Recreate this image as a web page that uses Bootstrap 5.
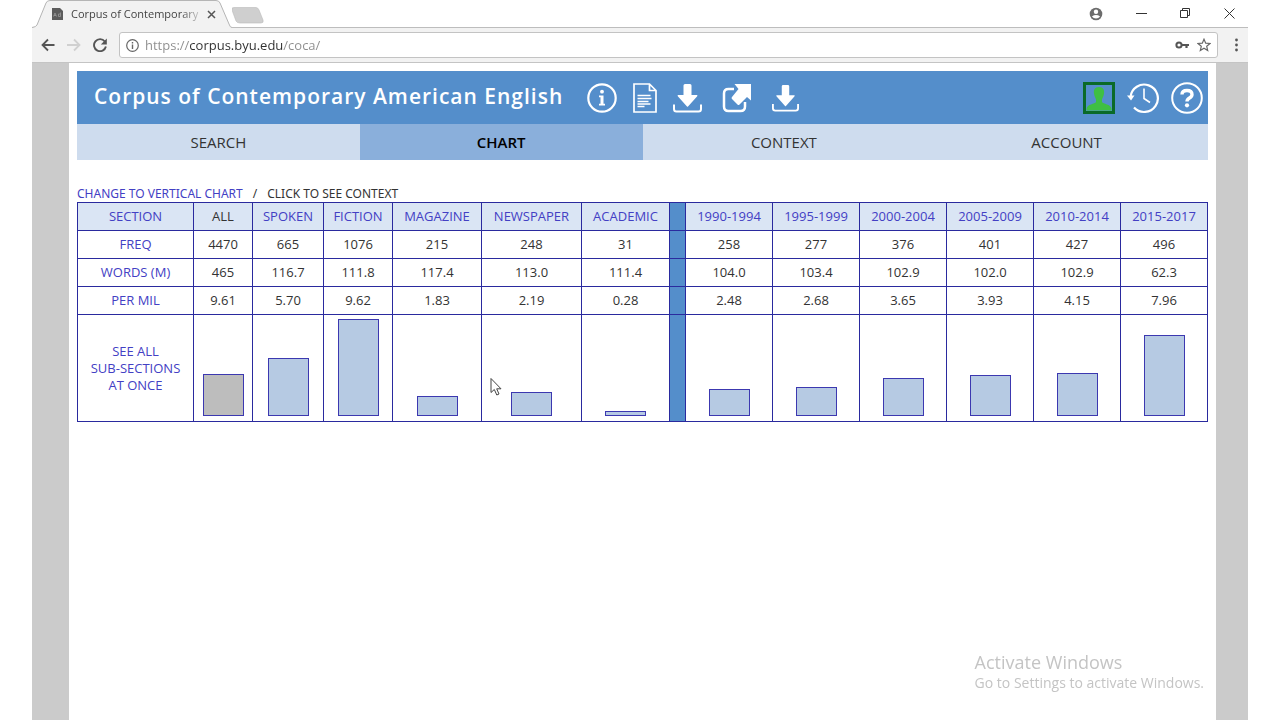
<!DOCTYPE html>
<html lang="en">
<head>
<meta charset="utf-8">
<meta name="viewport" content="width=device-width, initial-scale=1">
<title>Corpus of Contemporary American English</title>
<link href="https://cdn.jsdelivr.net/npm/bootstrap@5.3.0/dist/css/bootstrap.min.css" rel="stylesheet">
<style>
  body { font-family: "Open Sans", sans-serif; font-size: 13px; color: #333; background: #fff; padding: 0 32px; }
  svg { display: block; flex: none; }
  button.plain { border: 0; background: none; padding: 0; color: inherit; }

  /* browser frame */
  .tab-strip { height: 28px; border-bottom: 1px solid #bdbdbd; }
  .browser-tab { width: 200px; height: 28px; margin-bottom: -1px; padding: 0 15px 0 19px; }
  .browser-tab .tab-shape { position: absolute; inset: 0; }
  .browser-tab .tab-title { width: 128px; white-space: nowrap; color: #444; font-size: 11px;
    -webkit-mask-image: linear-gradient(to right, #000 85%, transparent 105%); mask-image: linear-gradient(to right, #000 85%, transparent 105%); }
  .window-buttons { gap: 33px; padding-right: 13px; color: #333; }
  .toolbar { height: 35px; background: #f2f2f2; border-bottom: 1px solid #c4c4c4; padding: 0 9px; gap: 12px; color: #555; }
  .address { height: 26px; border: 1px solid #c3c3c3; border-radius: 3px; background: #fff; padding: 0 6px; }
  .address input { border: 0; outline: 0; padding: 0 0 0 6px; min-width: 0; font-size: 13px; line-height: 20px; color: #888;
    background: linear-gradient(to right, #8d8d8d 50px, #2f2f2f 50px, #2f2f2f 144px, #8d8d8d 144px); -webkit-background-clip: text; background-clip: text; -webkit-text-fill-color: transparent; }

  /* page */
  .viewport-area { background: #cbcbcb; padding: 0 33px 0 37px; }
  .page { background: #fff; padding: 8px; }
  .site-header { height: 53px; background: #548ecb; color: #fff; padding: 0 5px 0 17px; }
  .site-header h1 { font-size: 21px; line-height: 30px; font-weight: 600; letter-spacing: 1px; }
  .site-header a { color: #fff; }
  .site-tabs .nav-link { height: 36px; line-height: 36px; padding: 0; font-size: 15px; color: #333; background: #cedcee; border-radius: 0; }
  .site-tabs .nav-link.active { background: #8aafdb; color: #000; font-weight: 600; }
  .chart-links { margin-top: 26px; gap: 10px; font: 12px/16px "Noto Sans", sans-serif; }
  a.soft { color: #4340c4; text-decoration: none; }
  .corpus { table-layout: fixed; width: 100%; border-collapse: collapse; text-align: center; line-height: 17px; }
  .corpus th, .corpus td { border: 1px solid #2a2a9e; height: 28px; padding: 0; font-weight: 400; vertical-align: middle; }
  .corpus thead th { background: #dae5f4; }
  .corpus td.divider { background: #548ecb; }
  .corpus .bars td { height: 107px; vertical-align: bottom; padding-bottom: 5px; }
  .bar { display: block; width: 41px; margin: 0 auto; background: #b6cae3; border: 1px solid #3c38b0; }
  .bar.total { background: #bdbdbd; }
  .pointer { position: absolute; left: 8px; top: 62px; }
  .watermark { position: fixed; right: 76px; bottom: 28px; color: #c4c4c4; }
  .watermark .head { font-size: 18px; line-height: 24px; }
  .watermark .note { font-size: 14px; line-height: 18px; }
</style>
</head>
<body class="min-vh-100 d-flex flex-column">

<header>
  <div class="tab-strip d-flex align-items-center">
    <div class="browser-tab position-relative d-flex align-items-center">
      <svg class="tab-shape" width="200" height="28" viewBox="0 0 200 28"><path d="M0 28V27.500Q4 27 5 25L14 3Q15 .5 18 .5H184Q187 .5 188 3L197 24Q198 27.500 200 27.500V28Z" fill="#f2f2f2"/><path d="M0 27.500Q4 27 5 25L14 3Q15 .5 18 .5H184Q187 .5 188 3L197 24Q198 27.500 200 27.500" fill="none" stroke="#b5b5b5"/></svg>
      <svg class="position-relative" width="12" height="14" viewBox="0 0 12 14"><path d="M1 1h8l3 3v9H1z" fill="#5c5c5c"/><path d="M2.500 9.500 4 6l1.500 3.500M3 8.500h2M9.500 5.500v4h-2v-2.500h2" fill="none" stroke="#999" stroke-width=".8"/></svg>
      <span class="tab-title position-relative ms-2">Corpus of Contemporary</span>
      <button class="plain position-relative ms-2" aria-label="Close tab"><svg width="9" height="9" viewBox="0 0 9 9"><path d="M1 1l7 7M8 1L1 8" stroke="#555" stroke-width="1.500"/></svg></button>
    </div>
    <button class="plain mt-1" aria-label="New tab"><svg width="34" height="17" viewBox="0 0 34 17"><path d="M3 .5H25Q27 .5 28 3L32 13Q33 16 30 16H9Q6 16 5 14L1 3Q0 .5 3 .5Z" transform="translate(-1)" fill="#cfcfcf" stroke="#bbb" stroke-width=".6"/></svg></button>
    <div class="window-buttons d-flex align-items-center ms-auto">
      <button class="plain" aria-label="Profile"><svg width="14" height="14" viewBox="0 0 14 14"><circle cx="7" cy="7" r="6.300" fill="#6c6c6c"/><circle cx="7" cy="4.700" r="2.200" fill="#fff"/><path d="M2.900 9.500Q7 6.700 11.100 9.500 9.500 11.500 7 11.500T2.900 9.500" fill="#fff"/></svg></button>
      <button class="plain" aria-label="Minimize"><svg width="11" height="11" viewBox="0 0 11 11"><path d="M0 5.500h11" stroke="currentColor"/></svg></button>
      <button class="plain" aria-label="Restore"><svg width="11" height="11" viewBox="0 0 11 11"><path d="M.5 2.500h7v7h-7zM2.500 2.500V.5h7v7h-2" fill="none" stroke="currentColor"/></svg></button>
      <button class="plain" aria-label="Close"><svg width="11" height="11" viewBox="0 0 11 11"><path d="M.5.5l10 10M10.500.5l-10 10" stroke="currentColor"/></svg></button>
    </div>
  </div>
  <div class="toolbar d-flex align-items-center">
    <button class="plain" aria-label="Back"><svg width="14" height="14" viewBox="0 0 14 14"><path d="M13.500 7H2M7 1.500 1.500 7 7 12.500" fill="none" stroke="#555" stroke-width="1.800"/></svg></button>
    <button class="plain" aria-label="Forward"><svg width="14" height="14" viewBox="0 0 14 14"><path d="M0 7h11.500M7 1.500 12.500 7 7 12.500" fill="none" stroke="#d0d0d0" stroke-width="1.800"/></svg></button>
    <button class="plain" aria-label="Reload"><svg width="14" height="14" viewBox="0 0 14 14"><path d="M11.800 3.500A6 6 0 1 0 12.900 8.500" fill="none" stroke="#555" stroke-width="1.900"/><path d="M13.800.5v6H7.800z" fill="#555"/></svg></button>
    <div class="address d-flex align-items-center flex-fill">
      <svg width="13" height="13" viewBox="0 0 13 13"><circle cx="6.500" cy="6.500" r="5.800" fill="none" stroke="#666" stroke-width="1.200"/><path d="M6.500 5.500v4.500M6.500 3v1.500" stroke="#666" stroke-width="1.400"/></svg>
      <input class="flex-fill" type="text" value="https://corpus.byu.edu/coca/" aria-label="Address">
      <button class="plain me-2" aria-label="Saved password"><svg width="14" height="8" viewBox="0 0 14 8"><circle cx="4" cy="4" r="2.600" fill="none" stroke="#555" stroke-width="2"/><path d="M7 4h7M11.500 4v3" stroke="#555" stroke-width="2.200"/></svg></button>
      <button class="plain" aria-label="Bookmark"><svg width="14" height="14" viewBox="0 0 14 14"><path d="M7 1.200 8.700 5.200 13 5.500 9.700 8.300 10.700 12.600 7 10.300 3.300 12.600 4.300 8.300 1 5.500 5.300 5.200Z" fill="none" stroke="#666" stroke-width="1.200"/></svg></button>
    </div>
    <button class="plain ms-1" aria-label="Menu"><svg width="5" height="14" viewBox="0 0 5 14" fill="#555"><circle cx="2.500" cy="2" r="1.400"/><circle cx="2.500" cy="7" r="1.400"/><circle cx="2.500" cy="12" r="1.400"/></svg></button>
  </div>
</header>

<div class="viewport-area flex-fill d-flex">
<main class="page flex-fill">
  <div class="site-header d-flex align-items-center">
    <h1 class="m-0 pb-1">Corpus of Contemporary American English</h1>
    <nav class="d-flex align-items-center flex-fill ms-4" aria-label="Tools">
      <a href="#info" aria-label="Information"><svg width="30" height="30" viewBox="0 0 30 30"><circle cx="15" cy="15" r="13.700" fill="none" stroke="#fff" stroke-width="2.200"/><circle cx="15" cy="8.700" r="1.900" fill="#fff"/><path d="M12 12.500h4.500v8.300h1.500v1.700h-6v-1.700h1.500v-6.600H12z" fill="#fff"/></svg></a>
      <a class="ms-3" href="#docs" aria-label="Document"><svg width="24" height="30" viewBox="0 0 24 30" fill="none" stroke="#fff" stroke-width="1.700"><path d="M1 1h15.500L23 7.500V29H1zM16.500 1v6.500H23"/><path d="M4.500 12.500h13M4.500 15.500h14M4.500 18.500h11M4.500 21h13M4.500 23.500h7" stroke-width="1.500"/></svg></a>
      <a class="ms-3" href="#download" aria-label="Download"><svg width="29" height="30" viewBox="0 0 29 30"><path d="M10.500 2.500Q10.500 1 12 1h5q1.500 0 1.500 1.500V12h5.500q1 .5 0 1.500L15 23.500q-.5.500-1 0L5 13.500Q4 12.500 5 12h5.500z" fill="#fff"/><path d="M1 21.500V26q0 2.500 2.500 2.500h22Q28 28.500 28 26V21.500" fill="none" stroke="#fff" stroke-width="2"/></svg></a>
      <a class="ms-3 ps-1" href="#export" aria-label="Open in new window"><svg width="30" height="30" viewBox="0 0 30 30"><path d="M12 6H6.500Q2 6 2 10.500V23.500Q2 28 6.500 28H18.500Q23 28 23 23.500V19" fill="none" stroke="#fff" stroke-width="2.500"/><path d="M12.500 1H29V17.500L25 14 17.500 21.500Q16.500 22.500 15.500 21.500L10 16Q9 15 10 14L16.500 6Z" fill="#fff"/></svg></a>
      <a class="ms-3 ps-1" href="#save" aria-label="Save"><svg width="27" height="28" viewBox="0 0 29 30"><path d="M10.500 2.500Q10.500 1 12 1h5q1.500 0 1.500 1.500V12h5.500q1 .5 0 1.500L15 23.500q-.5.500-1 0L5 13.500Q4 12.500 5 12h5.500z" fill="#fff"/><path d="M1 21.500V26q0 2.500 2.500 2.500h22Q28 28.500 28 26V21.500" fill="none" stroke="#fff" stroke-width="2"/></svg></a>
      <a class="ms-auto" href="#profile" aria-label="Profile"><svg width="32" height="32" viewBox="0 0 32 32"><path d="M1.500 1.500h29v29h-29z" fill="#548ecb" stroke="#0a6a28" stroke-width="3"/><path d="M16 5c4.500 0 5.500 3 5 6.500-.4 3-1.500 4.500-2 6V20c1 2 9 2 9.500 7v1.500h-25V27C4 22 12 22 13 20v-2.500c-.5-1.500-1.600-3-2-6C10.500 8 11.500 5 16 5z" fill="#3fbf43"/></svg></a>
      <a class="ms-2 ps-1" href="#history" aria-label="History"><svg width="32" height="32" viewBox="0 0 32 32" fill="none" stroke="#fff" stroke-width="2.200"><path d="M3.500 15A13.700 13.700 0 1 1 7 25.500"/><path d="M17 6.500V16.500L23 20.500" stroke-width="1.600"/><path d="M0 13.500 7.500 13.500 4 18.500Z" fill="#fff" stroke="none"/></svg></a>
      <a class="ms-2 ps-1" href="#help" aria-label="Help"><svg width="32" height="32" viewBox="0 0 32 32" fill="none" stroke="#fff"><circle cx="16" cy="16" r="14.800" stroke-width="2"/><path d="M11 12.500Q11 8.500 16 8.500T21 12.500Q21 14.500 18.500 16T16 19.500" stroke-width="3.400"/><circle cx="16" cy="23.300" r="2.100" fill="#fff" stroke="none"/></svg></a>
    </nav>
  </div>
  <nav class="site-tabs nav nav-fill nav-justified" aria-label="Sections">
    <a class="nav-link" href="#search">SEARCH</a>
    <a class="nav-link active" aria-current="page" href="#chart">CHART</a>
    <a class="nav-link" href="#context">CONTEXT</a>
    <a class="nav-link" href="#account">ACCOUNT</a>
  </nav>

  <div class="chart-links d-flex"><a class="soft" href="#vertical">CHANGE TO VERTICAL CHART</a><span>/</span><span>CLICK TO SEE CONTEXT</span></div>
  <table class="corpus">
    <colgroup>
      <col width="116"><col width="59"><col width="71"><col width="69"><col width="89"><col width="100"><col width="88"><col width="16">
      <col width="87"><col width="87"><col width="87"><col width="87"><col width="87"><col width="87">
    </colgroup>
    <thead>
      <tr><th scope="col"><a class="soft" href="#section">SECTION</a></th><th scope="col">ALL</th><th scope="col"><a class="soft" href="#s1">SPOKEN</a></th><th scope="col"><a class="soft" href="#s2">FICTION</a></th><th scope="col"><a class="soft" href="#s3">MAGAZINE</a></th><th scope="col"><a class="soft" href="#s4">NEWSPAPER</a></th><th scope="col"><a class="soft" href="#s5">ACADEMIC</a></th><td class="divider"></td><th scope="col"><a class="soft" href="#y1">1990-1994</a></th><th scope="col"><a class="soft" href="#y2">1995-1999</a></th><th scope="col"><a class="soft" href="#y3">2000-2004</a></th><th scope="col"><a class="soft" href="#y4">2005-2009</a></th><th scope="col"><a class="soft" href="#y5">2010-2014</a></th><th scope="col"><a class="soft" href="#y6">2015-2017</a></th></tr>
    </thead>
    <tbody>
      <tr><th scope="row"><a class="soft" href="#freq">FREQ</a></th><td>4470</td><td>665</td><td>1076</td><td>215</td><td>248</td><td>31</td><td class="divider"></td><td>258</td><td>277</td><td>376</td><td>401</td><td>427</td><td>496</td></tr>
      <tr><th scope="row"><a class="soft" href="#words">WORDS (M)</a></th><td>465</td><td>116.7</td><td>111.8</td><td>117.4</td><td>113.0</td><td>111.4</td><td class="divider"></td><td>104.0</td><td>103.4</td><td>102.9</td><td>102.0</td><td>102.9</td><td>62.3</td></tr>
      <tr><th scope="row"><a class="soft" href="#permil">PER MIL</a></th><td>9.61</td><td>5.70</td><td>9.62</td><td>1.83</td><td>2.19</td><td>0.28</td><td class="divider"></td><td>2.48</td><td>2.68</td><td>3.65</td><td>3.93</td><td>4.15</td><td>7.96</td></tr>
      <tr class="bars"><th scope="row"><a class="soft" href="#all">SEE ALL<br>SUB-SECTIONS<br>AT ONCE</a></th>
        <td><span class="bar total" style="height:42px"></span></td>
        <td><span class="bar" style="height:58px"></span></td>
        <td><span class="bar" style="height:97px"></span></td>
        <td><span class="bar" style="height:20px"></span></td>
        <td class="position-relative"><span class="bar" style="height:24px"></span>
          <svg class="pointer" width="12" height="20" viewBox="0 0 12 20"><path d="M1 1.500V15.500L4.300 12.500 6.800 18 9 17 6.700 11.800H11Z" fill="#fff" stroke="#444"/></svg></td>
        <td><span class="bar" style="height:5px"></span></td>
        <td class="divider"></td>
        <td><span class="bar" style="height:27px"></span></td>
        <td><span class="bar" style="height:29px"></span></td>
        <td><span class="bar" style="height:38px"></span></td>
        <td><span class="bar" style="height:41px"></span></td>
        <td><span class="bar" style="height:43px"></span></td>
        <td><span class="bar" style="height:81px"></span></td></tr>
    </tbody>
  </table>
</main>
</div>

<aside class="watermark"><div class="head">Activate Windows</div><div class="note">Go to Settings to activate Windows.</div></aside>

<script src="https://cdn.jsdelivr.net/npm/bootstrap@5.3.0/dist/js/bootstrap.bundle.min.js"></script>
</body>
</html>
